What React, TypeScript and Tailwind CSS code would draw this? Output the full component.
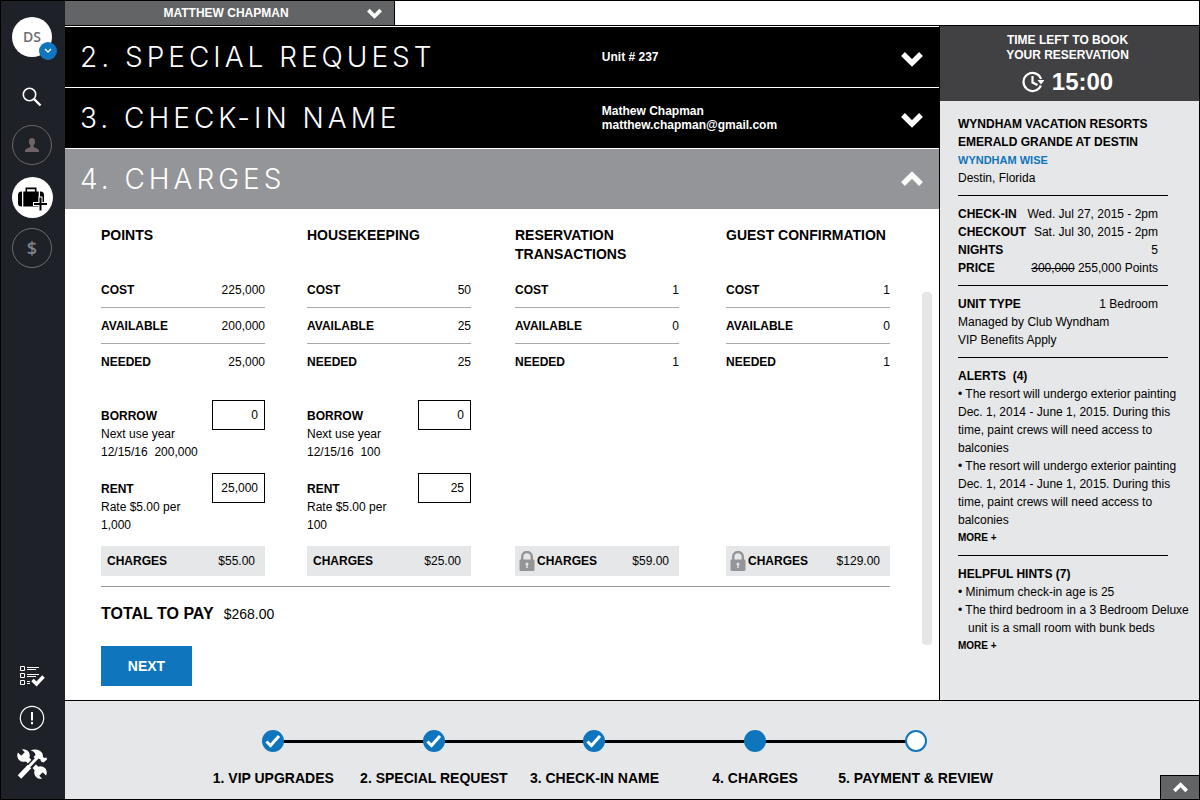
import React from "react";

const Chevron = ({ up = false, small = false }: { up?: boolean; small?: boolean }) => (
  <svg
    viewBox="0 0 22 16"
    className={small ? "h-[11px] w-[15px] shrink-0" : "h-4 w-[22px] shrink-0"}
    fill="none"
    stroke="currentColor"
    strokeWidth="5.4"
    aria-hidden="true"
  >
    <path d={up ? "M2 13 11 4l9 9" : "M2 3l9 9 9-9"} />
  </svg>
);

const Lock = () => (
  <svg viewBox="0 0 16 20" className="h-5 w-4 shrink-0" aria-hidden="true">
    <path d="M3.2 10V5.8a4.8 4.8 0 0 1 9.6 0V10" fill="none" stroke="#939598" strokeWidth="2.4" />
    <rect x="0.5" y="8.5" width="15" height="11.5" rx="1.2" fill="#939598" />
    <circle cx="8" cy="13" r="1.5" fill="#e6e7e8" />
    <path d="M7.3 13h1.4v4H7.3z" fill="#e6e7e8" />
  </svg>
);

type Row = [string, string];
type Field = { label: string; value: string; lines: string[] };
type Column = { title: string; rows: Row[]; fields: Field[]; charge: string; locked?: boolean };

const columns: Column[] = [
  {
    title: "POINTS",
    rows: [["COST", "225,000"], ["AVAILABLE", "200,000"], ["NEEDED", "25,000"]],
    fields: [
      { label: "BORROW", value: "0", lines: ["Next use year", "12/15/16\u00a0 200,000"] },
      { label: "RENT", value: "25,000", lines: ["Rate $5.00 per", "1,000"] },
    ],
    charge: "$55.00",
  },
  {
    title: "HOUSEKEEPING",
    rows: [["COST", "50"], ["AVAILABLE", "25"], ["NEEDED", "25"]],
    fields: [
      { label: "BORROW", value: "0", lines: ["Next use year", "12/15/16\u00a0 100"] },
      { label: "RENT", value: "25", lines: ["Rate $5.00 per", "100"] },
    ],
    charge: "$25.00",
  },
  {
    title: "RESERVATION TRANSACTIONS",
    rows: [["COST", "1"], ["AVAILABLE", "0"], ["NEEDED", "1"]],
    fields: [],
    charge: "$59.00",
    locked: true,
  },
  {
    title: "GUEST CONFIRMATION",
    rows: [["COST", "1"], ["AVAILABLE", "0"], ["NEEDED", "1"]],
    fields: [],
    charge: "$129.00",
    locked: true,
  },
];

const steps = ["1. VIP UPGRADES", "2. SPECIAL REQUEST", "3. CHECK-IN NAME", "4. CHARGES", "5. PAYMENT & REVIEW"];

function Sidebar() {
  return (
    <nav className="flex w-16 shrink-0 flex-col items-center bg-[#1e2128] pt-4 pr-0.5 pb-5" aria-label="Main">
      <button className="relative flex size-10 items-center justify-center rounded-full bg-white font-['Open_Sans',sans-serif] text-sm font-semibold text-[#6d6e71]">
        DS
        <span className="absolute -right-[5px] -bottom-[3px] flex size-[18px] items-center justify-center rounded-full bg-[#0f75bc]">
          <svg viewBox="0 0 8 6" className="h-1.5 w-2" fill="none" stroke="#fff" strokeWidth="1.3" aria-hidden="true">
            <path d="M1 1l3 3 3-3" />
          </svg>
        </span>
      </button>
      <button aria-label="Search" className="mt-[30px]">
        <svg viewBox="0 0 20 20" className="size-5" fill="none" stroke="#fff" aria-hidden="true">
          <circle cx="7.5" cy="7.5" r="6.2" strokeWidth="1.6" />
          <path d="M12 12l6.500 6.500" strokeWidth="2.4" />
        </svg>
      </button>
      <button aria-label="Profile" className="mt-[18px] flex size-10 items-center justify-center rounded-full border border-[#6d6468]">
        <svg viewBox="0 0 14 14" className="size-3.5" fill="#6d6468" aria-hidden="true">
          <path d="M7 0c2 0 3.1 1.500 3.100 3.600 0 1.600-.6 2.900-1.500 3.700v1.200c0 .5.300.700.800.900 2.600.900 4.600 1.500 4.600 3.600v1H0v-1c0-2.100 2-2.700 4.600-3.600.5-.2.800-.4.800-.9V7.300C4.500 6.500 3.900 5.200 3.900 3.600 3.900 1.500 5 0 7 0z" />
        </svg>
      </button>
      <button aria-label="Book a trip" className="mt-3 flex size-[41px] items-center justify-center rounded-full bg-white">
        <svg viewBox="0 0 30 24" className="h-6 w-[30px] overflow-visible" aria-hidden="true">
          <path d="M9.300 6V2.400h9.400V6" fill="none" stroke="#000" strokeWidth="1.600" />
          <path d="M4.500 5.500H5v15h-.500A3.500 3.500 0 0 1 1 17V9a3.500 3.500 0 0 1 3.500-3.500zM6.300 5.500h15.400v15H6.300zM23 5.500h.500A3.500 3.500 0 0 1 27 9v8a3.500 3.500 0 0 1-3.500 3.500H23z" />
          <path d="M23.500 10.500v15M16 18h15" stroke="#fff" strokeWidth="4" />
          <path d="M23.500 11.500v13M17 18h13" stroke="#000" strokeWidth="2" />
        </svg>
      </button>
      <button aria-label="Payments" className="mt-2.5 flex size-10 items-center justify-center rounded-full border border-[#6d6e71] font-['Open_Sans',sans-serif] text-lg font-semibold text-[#808285]">
        $
      </button>
      <div className="grow" />
      <button aria-label="Tasks">
        <svg viewBox="0 0 26 22" className="h-[22px] w-[26px]" fill="none" stroke="#fff" aria-hidden="true">
          <path d="M1.500 1.500h4v4h-4zM1.500 8.500h4v4h-4zM1.500 15.500h4v4h-4z" strokeWidth="1" />
          <path d="M8 2.500h12M8 4.500h9M8 9.500h12M8 11.500h9M8 16.500h3M8 18.500h3" strokeWidth="1" />
          <path d="M13.500 15l4 4 7-7.500" strokeWidth="3.400" />
        </svg>
      </button>
      <button aria-label="Notices" className="mt-[18px]">
        <svg viewBox="0 0 26 26" className="size-[26px]" fill="none" stroke="#fff" aria-hidden="true">
          <circle cx="13" cy="13" r="11.700" strokeWidth="1.200" />
          <path d="M13 7v8.500M13 17v2.200" strokeWidth="2" />
        </svg>
      </button>
      <button aria-label="Tools" className="mt-[18px]">
        <svg viewBox="0 0 30 30" className="size-[30px]" aria-hidden="true">
          <circle cx="6.500" cy="6.500" r="6.300" fill="#fff" />
          <circle cx="23.500" cy="23.500" r="6.300" fill="#fff" />
          <path d="M6 5L.5-.5M24 25l5.500 5.500" stroke="#1e2128" strokeWidth="5" />
          <path d="M8 8l14 14" stroke="#fff" strokeWidth="5" />
          <path d="M4 26.500L21 8.500" stroke="#1e2128" strokeWidth="6.500" />
          <path d="M13.500 1.500C18-.5 23 .5 25.500 4.500L26 8l1.500 1 2-.5.500 2-3.500 3-2.500-1-.5-2-2-1-2 1.500-3-3 2-2c-.5-2.500-2-4-5-4.500z" fill="#fff" />
          <path d="M20.500 8.500L11 18.500" stroke="#fff" strokeWidth="2.800" />
          <path d="M12.500 17.500L2.500 28" stroke="#fff" strokeWidth="4.800" />
        </svg>
      </button>
    </nav>
  );
}

function AccordionHeader({ title, open = false, children }: { title: string; open?: boolean; children?: React.ReactNode }) {
  return (
    <h2>
      <button
        aria-expanded={open}
        className={`flex h-[61px] w-full items-center border-t border-white pr-4 pl-[15px] text-left text-white ${open ? "bg-[#939598]" : "bg-black"}`}
      >
        <span className="w-3/5 shrink-0 pt-0.5 font-[Inter,sans-serif] text-[28px] font-light tracking-[4px] whitespace-nowrap">{title}</span>
        <span className="grow pl-4 text-xs leading-[14px] font-bold">{children}</span>
        <span className={open ? "" : "pt-1"}>
          <Chevron up={open} />
        </span>
      </button>
    </h2>
  );
}

function ChargeColumn({ column, id }: { column: Column; id: number }) {
  return (
    <section className="flex w-[164px] flex-col">
      <h3 className="h-[38px] text-sm leading-[19px] font-bold">{column.title}</h3>
      <dl className="mt-2">
        {column.rows.map(([label, value]) => (
          <div key={label} className="flex h-9 items-center justify-between border-b border-[#a7a9ac] last:border-b-0">
            <dt className="font-bold">{label}</dt>
            <dd>{value}</dd>
          </div>
        ))}
      </dl>
      {column.fields.length > 0 && (
        <div className="mt-5 space-y-3">
          {column.fields.map((field) => (
            <div key={field.label} className="flex items-start justify-between">
              <div className="w-[108px] pt-[7px] leading-[18px]">
                <label htmlFor={`${field.label}-${id}`} className="block font-bold">{field.label}</label>
                {field.lines.map((line) => (
                  <p key={line} className="whitespace-nowrap">{line}</p>
                ))}
              </div>
              <input
                id={`${field.label}-${id}`}
                defaultValue={field.value}
                className="h-[30px] w-[53px] border border-black bg-white px-1.5 text-right"
              />
            </div>
          ))}
        </div>
      )}
      <p className={`mt-auto flex h-[30px] items-center bg-[#e6e7e8] pr-2.5 ${column.locked ? "pl-1" : "pl-1.5"}`}>
        {column.locked && <Lock />}
        <span className={column.locked ? "ml-0.5 font-bold" : "font-bold"}>CHARGES</span>
        <span className="ml-auto">{column.charge}</span>
      </p>
    </section>
  );
}

const Rule = () => <hr className="mt-2 mb-[9px] w-[210px] border-black" />;

function Detail({ label, children }: { label: string; children: React.ReactNode }) {
  return (
    <div className="flex justify-between">
      <dt className="font-bold">{label}</dt>
      <dd>{children}</dd>
    </div>
  );
}

function Reservation() {
  return (
    <aside className="w-[260px] shrink-0 border-l border-black bg-[#e6e7e8]">
      <div className="flex h-[75px] flex-col items-center bg-[#414042] pt-[7px] pr-1 text-center text-white">
        <p className="text-xs leading-[15px] font-bold">
          TIME LEFT TO BOOK
          <br />
          YOUR RESERVATION
        </p>
        <p className="mt-1 flex items-center gap-2 text-2xl leading-[30px] font-bold">
          <svg viewBox="0 0 22 22" className="size-[22px]" fill="none" stroke="#fff" strokeWidth="2.200" aria-hidden="true">
            <path d="M18.800 14.500A9 9 0 1 1 19 8" />
            <path d="M10.500 5v6.500l5 2.500" />
            <path d="M15.500 9h7L19 13.500z" fill="#fff" stroke="none" />
          </svg>
          15:00
        </p>
      </div>
      <div className="pt-3.5 pr-2 pl-[18px] leading-[18px]">
        <h2 className="font-bold whitespace-nowrap">
          WYNDHAM VACATION RESORTS
          <br />
          EMERALD GRANDE AT DESTIN
        </h2>
        <a href="#wise" className="block text-[11px] leading-[18px] font-bold text-[#0f75bc]">WYNDHAM WISE</a>
        <p>Destin, Florida</p>
        <Rule />
        <dl className="w-[200px]">
          <Detail label="CHECK-IN">Wed. Jul 27, 2015 - 2pm</Detail>
          <Detail label="CHECKOUT">Sat. Jul 30, 2015 - 2pm</Detail>
          <Detail label="NIGHTS">5</Detail>
          <Detail label="PRICE"><s>300,000</s> 255,000 Points</Detail>
        </dl>
        <Rule />
        <dl className="w-[200px]">
          <Detail label="UNIT TYPE">1 Bedroom</Detail>
        </dl>
        <p>Managed by Club Wyndham</p>
        <p>VIP Benefits Apply</p>
        <Rule />
        <h3 className="font-bold">ALERTS&nbsp; (4)</h3>
        <div className="max-w-[222px]">
          <p>• The resort will undergo exterior painting Dec. 1, 2014 - June 1, 2015. During this time, paint crews will need access to balconies</p>
          <p>• The resort will undergo exterior painting Dec. 1, 2014 - June 1, 2015. During this time, paint crews will need access to balconies</p>
        </div>
        <a href="#alerts" className="block text-[10px] leading-[18px] font-bold">MORE +</a>
        <Rule />
        <h3 className="font-bold">HELPFUL HINTS (7)</h3>
        <p>• Minimum check-in age is 25</p>
        <p className="pl-2.5 -indent-2.5">• The third bedroom in a 3 Bedroom Deluxe unit is a small room with bunk beds</p>
        <a href="#hints" className="block text-[10px] leading-[18px] font-bold">MORE +</a>
      </div>
    </aside>
  );
}

function Progress() {
  return (
    <footer className="relative h-[99px] border-t border-black bg-[#e6e7e8] pt-[29px] pl-32">
      <ol className="grid w-[803px] grid-cols-5">
        {steps.map((step, i) => (
          <li key={step} className="relative flex flex-col items-center">
            {i < steps.length - 1 && <span className="absolute top-[10px] left-1/2 h-[3px] w-full bg-black" />}
            <span className={`relative flex size-[22px] items-center justify-center rounded-full border-2 border-[#0f75bc] ${i < 4 ? "bg-[#0f75bc]" : "bg-white"}`}>
              {i < 3 && (
                <svg viewBox="0 0 16 14" className="h-3.5 w-4 shrink-0" fill="none" stroke="#fff" strokeWidth="3" aria-hidden="true">
                  <path d="M1.500 7.500l4 4L14 2" />
                </svg>
              )}
            </span>
            <span className="mt-[17px] text-sm leading-[18px] font-bold whitespace-nowrap">{step}</span>
          </li>
        ))}
      </ol>
      <button aria-label="Expand" className="absolute right-0 bottom-0 flex h-6 w-[39px] items-center justify-center border-t border-l border-black bg-[#636466] text-white">
        <Chevron up small />
      </button>
    </footer>
  );
}

export default function App() {
  return (
    <div className="flex min-h-screen border border-black bg-white font-['Liberation_Sans',Arial,sans-serif] text-xs text-black">
      <Sidebar />
      <div className="flex min-w-0 grow flex-col">
        <header className="flex h-[25px] border-b border-black">
          <button className="flex w-[330px] items-center border-r border-black bg-[#636466] pr-3 text-xs font-bold text-white">
            <span className="grow pl-5">MATTHEW CHAPMAN</span>
            <Chevron small />
          </button>
        </header>
        <div className="flex grow">
          <main className="flex min-w-0 grow flex-col">
            <AccordionHeader title="2. SPECIAL REQUEST">Unit # 237</AccordionHeader>
            <AccordionHeader title="3. CHECK-IN NAME">
              Mathew Chapman
              <br />
              matthew.chapman@gmail.com
            </AccordionHeader>
            <AccordionHeader title="4. CHARGES" open />
            <div className="flex grow pr-[7px] pl-9">
              <form className="flex grow flex-col pt-[17px]">
                <div className="mr-8 grid h-[350px] grid-cols-[206fr_208fr_211fr_164fr]">
                  {columns.map((column, i) => (
                    <ChargeColumn key={column.title} column={column} id={i} />
                  ))}
                </div>
                <hr className="mt-2.5 mr-8 border-[#939598]" />
                <p className="mt-[15px] flex items-center gap-2.5 text-sm leading-6">
                  <strong className="text-base leading-6">TOTAL TO PAY</strong> $268.00
                </p>
                <button type="button" className="mt-5 h-10 w-[91px] bg-[#0f75bc] text-sm font-bold text-white">NEXT</button>
              </form>
              <div className="mt-[83px] mb-[55px] w-2.5 shrink-0 rounded bg-[#e6e6e6]" />
            </div>
          </main>
          <Reservation />
        </div>
        <Progress />
      </div>
    </div>
  );
}
